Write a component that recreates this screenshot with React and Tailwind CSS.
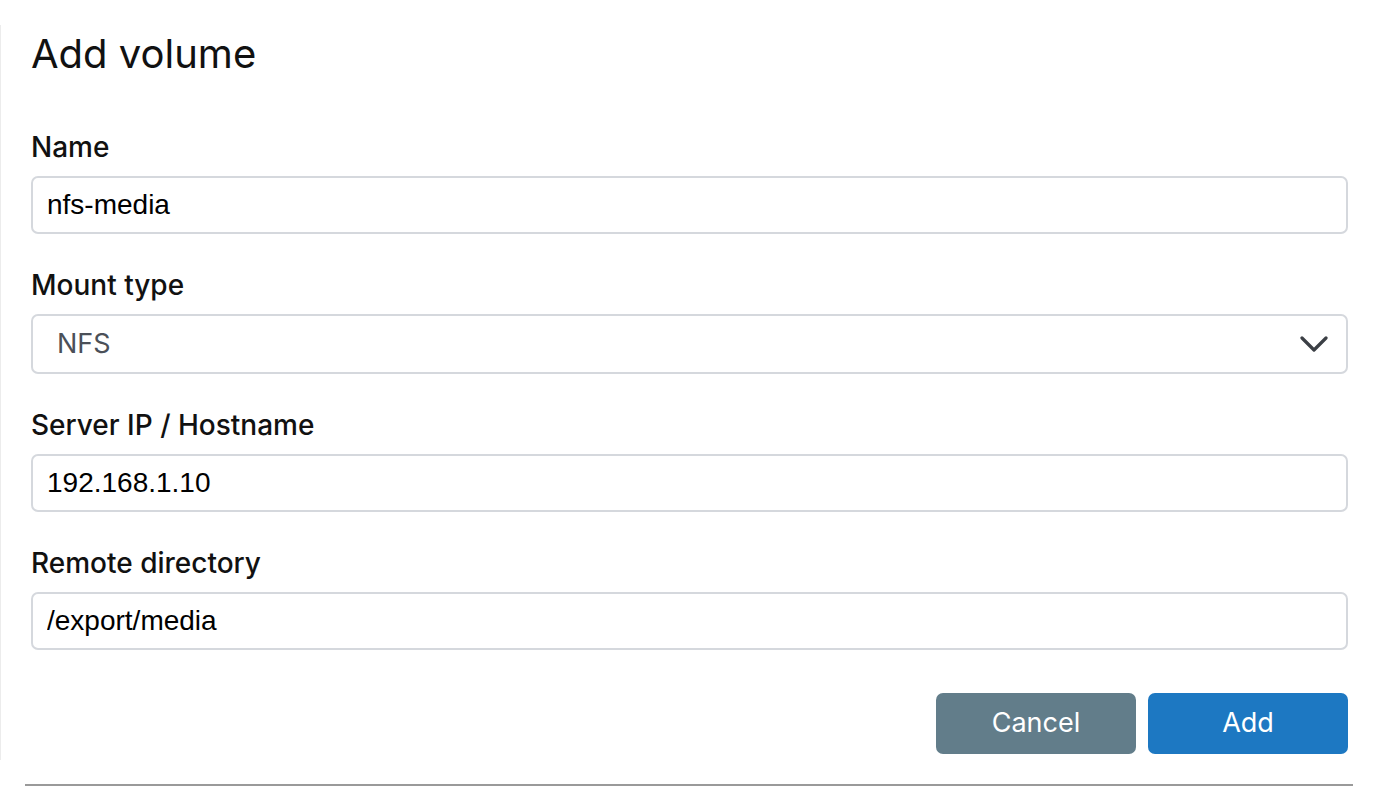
const Field = ({ label, children }) => (
  <div className="flex flex-col">
    <label className="mb-[11px] text-[28px] leading-[36px] font-medium text-[#111]">{label}</label>
    {children}
  </div>
);

const TextInput = ({ value }) => (
  <input
    readOnly
    value={value}
    className="h-[58px] w-full rounded-[7px] border-2 border-[#d5d8dd] bg-white px-[14px] text-[28px] text-black outline-none"
    style={{ fontFamily: '"Liberation Sans", Arial, sans-serif' }}
  />
);

export default function App() {
  return (
    <div className="relative h-[786px] w-[1378px] overflow-hidden bg-white font-['Inter',sans-serif]">
      <div className="absolute left-0 top-[25px] h-[735px] w-px bg-[#ececec]" />
      <div className="flex flex-col pl-[31px] pr-[30px] pt-[30px]">
        <h1 className="text-[40px] leading-[48px] font-normal text-[#111]">Add volume</h1>

        <div className="mt-[51px] flex flex-col gap-[33px]">
          <Field label="Name">
            <TextInput value="nfs-media" />
          </Field>

          <Field label="Mount type">
            <div className="flex h-[60px] items-center justify-between rounded-[7px] border-2 border-[#d5d8dd] bg-white pl-[24px] pr-[18px]">
              <span className="text-[27px] text-[#4b5058]">NFS</span>
              <svg width="28" height="16" viewBox="0 0 28 16" fill="none" stroke="#3b3f45" strokeWidth="3.2" strokeLinecap="round" strokeLinejoin="round">
                <path d="M2 2 L14 14 L26 2" />
              </svg>
            </div>
          </Field>

          <Field label="Server IP / Hostname">
            <TextInput value="192.168.1.10" />
          </Field>

          <Field label="Remote directory">
            <TextInput value="/export/media" />
          </Field>
        </div>

        <div className="mt-[43px] flex justify-end gap-[12px]">
          <button className="h-[61px] w-[200px] rounded-[7px] bg-[#627d8a] text-[27px] text-white">Cancel</button>
          <button className="h-[61px] w-[200px] rounded-[7px] bg-[#1d78c2] text-[27px] text-white">Add</button>
        </div>

        <div className="ml-[-6px] mr-[-5px] mt-[30px] h-[2px] bg-[#9a9a9a]" />
      </div>
    </div>
  );
}
